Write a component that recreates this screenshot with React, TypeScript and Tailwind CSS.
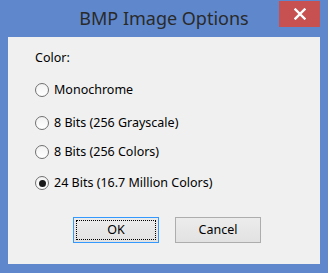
import React from "react";

function Radio({ checked }: { checked?: boolean }) {
  return (
    <span className="w-[14px] h-[14px] rounded-full border border-[#707070] bg-gradient-to-b from-[#f2f2f2] to-[#ffffff] flex items-center justify-center shrink-0">
      {checked && <span className="w-[7px] h-[7px] rounded-full bg-[#1a1a1a]" />}
    </span>
  );
}

function Option({ label, checked, className }: { label: string; checked?: boolean; className?: string }) {
  return (
    <div className={"flex items-center h-[16px] gap-[5px] " + (className ?? "")}>
      <Radio checked={checked} />
      <span>{label}</span>
    </div>
  );
}

export default function App() {
  return (
    <div
      className="w-[328px] h-[273px] bg-[#5f88cc] flex flex-col text-[#000]"
      style={{ fontFamily: '"Noto Sans", "Open Sans", sans-serif' }}
    >
      <div className="h-[37px] relative flex items-center justify-center shrink-0">
        <span className="text-[18px] text-[#2a2a2a] leading-none -mt-[1px]">BMP Image Options</span>
        <div className="absolute right-[8px] top-[1px] w-[41px] h-[26px] bg-[#c75050] flex items-center justify-center">
          <svg width="12" height="12" viewBox="0 0 12 12">
            <path d="M1.5 1.5 L10.5 10.5 M10.5 1.5 L1.5 10.5" stroke="#fff" strokeWidth="2.4" strokeLinecap="square" />
          </svg>
        </div>
      </div>
      <div className="mx-[8px] mb-[9px] flex-1 bg-[#f0f0f0] flex flex-col text-[12.5px] leading-[16px]">
        <div className="pl-[27px] mt-[13px] h-[16px]">Color:</div>
        <div className="pl-[27px] flex flex-col">
          <Option label="Monochrome" className="mt-[16px]" />
          <Option label="8 Bits (256 Grayscale)" className="mt-[17px]" />
          <Option label="8 Bits (256 Colors)" className="mt-[13px]" />
          <Option label="24 Bits (16.7 Million Colors)" checked className="mt-[15px]" />
        </div>
        <div className="flex pl-[65px] gap-[16px] mt-[26px]">
          <button className="w-[86px] h-[26px] border border-[#3399ff] bg-gradient-to-b from-[#ececec] to-[#e2e2e2] p-[2px]">
            <span className="w-full h-full border border-dotted border-[#000] flex items-center justify-center">OK</span>
          </button>
          <button className="w-[86px] h-[26px] border border-[#adadad] bg-gradient-to-b from-[#ececec] to-[#e2e2e2] flex items-center justify-center">
            Cancel
          </button>
        </div>
      </div>
    </div>
  );
}
